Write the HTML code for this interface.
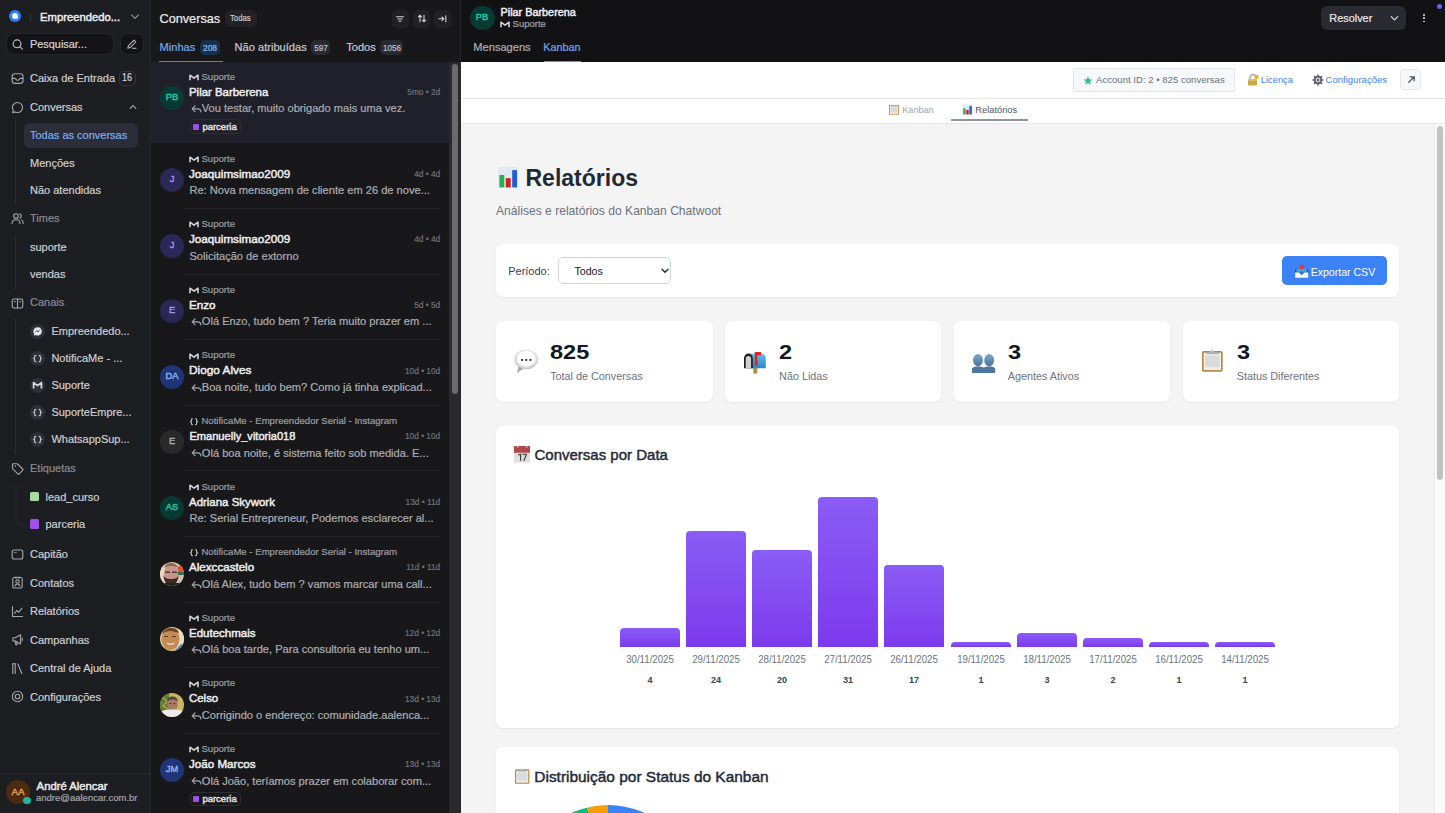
<!DOCTYPE html>
<html><head><meta charset="utf-8"><style>
html,body{margin:0;padding:0;}
body{width:1445px;height:813px;overflow:hidden;position:relative;background:#18181b;font-family:"Liberation Sans",sans-serif;}
.t{position:absolute;white-space:nowrap;}
.b{position:absolute;}
</style></head><body>
<div class="b" style="left:0.00px;top:0.00px;width:150.00px;height:813.00px;background:#1d1e22;"></div>
<div class="b" style="left:149.00px;top:0.00px;width:2.50px;height:813.00px;background:#232428;"></div>
<svg class="b" style="left:9.10px;top:10.30px;" width="12" height="12" viewBox="0 0 12 12"><circle cx="6" cy="6" r="6" fill="#2b82f5"/><path d="M8.9 5.9a2.9 2.9 0 1 0-2.9 2.9H8.9z" fill="#fff"/></svg>
<div class="b" style="left:30.00px;top:12.50px;width:1.00px;height:8.50px;background:#34353a;"></div>
<div class="t" style="left:40.00px;top:12.00px;font-size:11.25px;line-height:11.25px;color:#ececee;-webkit-text-stroke:0.45px #ececee;">Empreendedo...</div>
<svg class="b" style="left:130.00px;top:13.00px;" width="10" height="7" viewBox="0 0 10 7"><path d="M1.5 1.8l3.5 3.5 3.5-3.5" stroke="#8d8f96" stroke-width="1.2" fill="none" stroke-linecap="round" stroke-linejoin="round"/></svg>
<div class="b" style="left:6.00px;top:33.00px;width:108.00px;height:21.50px;background:#141418;border:1px solid #27282d;border-radius:8px;box-sizing:border-box;"></div>
<svg class="b" style="left:12.00px;top:39.00px;" width="12" height="11" viewBox="0 0 12 11"><circle cx="5" cy="4.8" r="3.9" stroke="#bdbec3" stroke-width="1.15" fill="none"/><path d="M7.9 7.7l2.5 2.5" stroke="#bdbec3" stroke-width="1.15" stroke-linecap="round"/></svg>
<div class="t" style="left:30.00px;top:39.00px;font-size:10.9px;line-height:10.9px;color:#d4d5d9;-webkit-text-stroke:0.2px #d4d5d9;">Pesquisar...</div>
<div class="b" style="left:120.00px;top:33.00px;width:24.00px;height:21.50px;background:#141418;border:1px solid #27282d;border-radius:8px;box-sizing:border-box;"></div>
<svg class="b" style="left:126.00px;top:38.00px;" width="12" height="12" viewBox="0 0 12 12"><path d="M8 2.2l1.8 1.8-5.6 5.6-2.4.6.6-2.4z" stroke="#bdbec3" stroke-width="1.05" fill="none" stroke-linejoin="round"/><path d="M6.5 10.2h3.5" stroke="#bdbec3" stroke-width="1.05" stroke-linecap="round"/></svg>
<svg class="b" style="left:11.00px;top:71.50px;" width="13" height="13" viewBox="0 0 13 13"><rect x="1.2" y="1.8" width="10.8" height="9.6" rx="2.6" stroke="#a4a6ac" stroke-width="1.1" fill="none" stroke-linecap="round" stroke-linejoin="round"/><path d="M1.2 6.4h2.6c.5 0 .8.3 1 .7.4.8 1 1.2 1.8 1.2s1.4-.4 1.8-1.2c.2-.4.5-.7 1-.7h2.6" stroke="#a4a6ac" stroke-width="1.1" fill="none" stroke-linecap="round" stroke-linejoin="round"/></svg>
<div class="t" style="left:30.00px;top:73.00px;font-size:11px;line-height:11px;color:#cdced2;-webkit-text-stroke:0.2px #cdced2;">Caixa de Entrada</div>
<div class="b" style="left:119.30px;top:70.60px;width:16.30px;height:15.80px;border:1px solid #34353b;border-radius:4px;box-sizing:border-box;"></div>
<div class="t" style="left:27.45px;width:200px;text-align:center;top:73.00px;font-size:10.4px;line-height:10.4px;color:#d4d5d9;-webkit-text-stroke:0.2px #d4d5d9;transform:scaleX(0.86);transform-origin:center;">16</div>
<svg class="b" style="left:11.00px;top:101.00px;" width="13" height="13" viewBox="0 0 13 13"><path d="M6.5 1.5a5 5 0 0 1 0 10c-.9 0-1.7-.2-2.4-.6l-2.6.8.8-2.4A5 5 0 0 1 6.5 1.5z" stroke="#a4a6ac" stroke-width="1.1" fill="none" stroke-linecap="round" stroke-linejoin="round"/></svg>
<div class="t" style="left:30.00px;top:102.00px;font-size:11px;line-height:11px;color:#cdced2;-webkit-text-stroke:0.2px #cdced2;">Conversas</div>
<svg class="b" style="left:129.00px;top:104.00px;" width="8" height="6" viewBox="0 0 8 6"><path d="M1.2 4.3L4 1.6l2.8 2.7" stroke="#a4a6ac" stroke-width="1.1" fill="none" stroke-linecap="round"/></svg>
<div class="b" style="left:15.00px;top:118.00px;width:1.00px;height:86.00px;background:#2a2b30;"></div>
<div class="b" style="left:24.00px;top:123.00px;width:114.00px;height:25.00px;background:#2b2d38;border-radius:6px;"></div>
<div class="t" style="left:30.00px;top:130.00px;font-size:11px;line-height:11px;color:#79b0f1;-webkit-text-stroke:0.2px #79b0f1;">Todas as conversas</div>
<div class="t" style="left:30.00px;top:158.00px;font-size:11px;line-height:11px;color:#cdced2;-webkit-text-stroke:0.2px #cdced2;">Menções</div>
<div class="t" style="left:30.00px;top:185.00px;font-size:11px;line-height:11px;color:#cdced2;-webkit-text-stroke:0.2px #cdced2;">Não atendidas</div>
<svg class="b" style="left:11.00px;top:212.00px;" width="13" height="13" viewBox="0 0 13 13"><circle cx="5" cy="4" r="2.3" stroke="#a4a6ac" stroke-width="1.1" fill="none" stroke-linecap="round" stroke-linejoin="round"/><path d="M1 11.5c0-2.2 1.8-3.8 4-3.8s4 1.6 4 3.8" stroke="#a4a6ac" stroke-width="1.1" fill="none" stroke-linecap="round" stroke-linejoin="round"/><path d="M8.6 1.9a2.2 2.2 0 0 1 0 4.3M10.5 7.9c1 .6 1.7 1.9 1.7 3.6" stroke="#a4a6ac" stroke-width="1.1" fill="none" stroke-linecap="round" stroke-linejoin="round"/></svg>
<div class="t" style="left:30.00px;top:213.00px;font-size:11px;line-height:11px;color:#8a8c93;-webkit-text-stroke:0.2px #8a8c93;">Times</div>
<div class="b" style="left:15.00px;top:235.00px;width:1.00px;height:54.00px;background:#2a2b30;"></div>
<div class="t" style="left:30.00px;top:242.00px;font-size:11px;line-height:11px;color:#cdced2;-webkit-text-stroke:0.2px #cdced2;">suporte</div>
<div class="t" style="left:30.00px;top:269.00px;font-size:11px;line-height:11px;color:#cdced2;-webkit-text-stroke:0.2px #cdced2;">vendas</div>
<svg class="b" style="left:11.00px;top:296.50px;" width="13" height="13" viewBox="0 0 13 13"><rect x="1.2" y="2" width="10.6" height="9" rx="1.8" stroke="#a4a6ac" stroke-width="1.1" fill="none" stroke-linecap="round" stroke-linejoin="round"/><path d="M6.5 2v9M3.3 4.8h1.2M8.5 4.8h1.2" stroke="#a4a6ac" stroke-width="1.1" fill="none" stroke-linecap="round" stroke-linejoin="round"/></svg>
<div class="t" style="left:30.00px;top:297.00px;font-size:11px;line-height:11px;color:#8a8c93;-webkit-text-stroke:0.2px #8a8c93;">Canais</div>
<div class="b" style="left:15.00px;top:319.00px;width:1.00px;height:135.50px;background:#2a2b30;"></div>
<svg class="b" style="left:30.10px;top:323.90px;" width="15" height="15" viewBox="0 0 15 15"><circle cx="7.5" cy="7.5" r="7.5" fill="#2e3039"/><path d="M7.5 3.3a4.1 4.1 0 0 0-3.3 6.6l-.3 1.8 1.7-.8A4.1 4.1 0 1 0 7.5 3.3z" fill="#e6e7ea"/><path d="M5.3 8.2l1.5-1.5 1.2 1 1.6-1.5" stroke="#2e3039" stroke-width=".9" fill="none"/></svg>
<div class="t" style="left:51.40px;top:326.00px;font-size:11px;line-height:11px;color:#cdced2;-webkit-text-stroke:0.2px #cdced2;">Empreendedo...</div>
<svg class="b" style="left:30.10px;top:351.00px;" width="15" height="15" viewBox="0 0 15 15"><circle cx="7.5" cy="7.5" r="7.5" fill="#2e3039"/><path d="M5.9 4.3c-.8 0-1.2.4-1.2 1v.8c0 .6-.3 1.1-.9 1.4.6.3.9.8.9 1.4v.8c0 .6.4 1 1.2 1M9.1 4.3c.8 0 1.2.4 1.2 1v.8c0 .6.3 1.1.9 1.4-.6.3-.9.8-.9 1.4v.8c0 .6-.4 1-1.2 1" stroke="#c9cace" stroke-width="1.15" fill="none" stroke-linecap="round"/></svg>
<div class="t" style="left:51.40px;top:353.00px;font-size:11px;line-height:11px;color:#cdced2;-webkit-text-stroke:0.2px #cdced2;">NotificaMe - ...</div>
<svg class="b" style="left:30.10px;top:378.00px;" width="15" height="15" viewBox="0 0 15 15"><circle cx="7.5" cy="7.5" r="7.5" fill="#2e3039"/><path d="M3.6 10.5V4.6l3.9 3 3.9-3v5.9" stroke="#dcdde0" stroke-width="1.7" fill="none" stroke-linejoin="round"/></svg>
<div class="t" style="left:51.40px;top:380.00px;font-size:11px;line-height:11px;color:#cdced2;-webkit-text-stroke:0.2px #cdced2;">Suporte</div>
<svg class="b" style="left:30.10px;top:404.90px;" width="15" height="15" viewBox="0 0 15 15"><circle cx="7.5" cy="7.5" r="7.5" fill="#2e3039"/><path d="M5.9 4.3c-.8 0-1.2.4-1.2 1v.8c0 .6-.3 1.1-.9 1.4.6.3.9.8.9 1.4v.8c0 .6.4 1 1.2 1M9.1 4.3c.8 0 1.2.4 1.2 1v.8c0 .6.3 1.1.9 1.4-.6.3-.9.8-.9 1.4v.8c0 .6-.4 1-1.2 1" stroke="#c9cace" stroke-width="1.15" fill="none" stroke-linecap="round"/></svg>
<div class="t" style="left:51.40px;top:407.00px;font-size:11px;line-height:11px;color:#cdced2;-webkit-text-stroke:0.2px #cdced2;">SuporteEmpre...</div>
<svg class="b" style="left:30.10px;top:432.20px;" width="15" height="15" viewBox="0 0 15 15"><circle cx="7.5" cy="7.5" r="7.5" fill="#2e3039"/><path d="M5.9 4.3c-.8 0-1.2.4-1.2 1v.8c0 .6-.3 1.1-.9 1.4.6.3.9.8.9 1.4v.8c0 .6.4 1 1.2 1M9.1 4.3c.8 0 1.2.4 1.2 1v.8c0 .6.3 1.1.9 1.4-.6.3-.9.8-.9 1.4v.8c0 .6-.4 1-1.2 1" stroke="#c9cace" stroke-width="1.15" fill="none" stroke-linecap="round"/></svg>
<div class="t" style="left:51.40px;top:434.00px;font-size:11px;line-height:11px;color:#cdced2;-webkit-text-stroke:0.2px #cdced2;">WhatsappSup...</div>
<svg class="b" style="left:11.00px;top:461.50px;" width="13" height="13" viewBox="0 0 13 13"><path d="M1.5 2.5v3.6c0 .3.1.5.3.7l5 5c.4.4 1 .4 1.4 0l3.4-3.4c.4-.4.4-1 0-1.4l-5-5c-.2-.2-.4-.3-.7-.3H2.5c-.6 0-1 .4-1 .8z" stroke="#a4a6ac" stroke-width="1.1" fill="none" stroke-linecap="round" stroke-linejoin="round"/><circle cx="4.3" cy="4.3" r=".8" fill="#a4a6ac"/></svg>
<div class="t" style="left:30.00px;top:463.00px;font-size:11px;line-height:11px;color:#8a8c93;-webkit-text-stroke:0.2px #8a8c93;">Etiquetas</div>
<svg class="b" style="left:14.50px;top:484.50px;" width="10" height="41" viewBox="0 0 10 41"><path d="M1 0v35c0 2.8 2.2 5 5 5h4" stroke="#2a2b30" stroke-width="1" fill="none"/></svg>
<div class="b" style="left:30.00px;top:492.00px;width:9.20px;height:9.40px;background:#a6dba2;border-radius:1.5px;"></div>
<div class="t" style="left:45.50px;top:492.00px;font-size:11px;line-height:11px;color:#cdced2;-webkit-text-stroke:0.2px #cdced2;">lead_curso</div>
<div class="b" style="left:30.00px;top:519.40px;width:9.20px;height:9.20px;background:#9d50ea;border-radius:1.5px;"></div>
<div class="t" style="left:45.50px;top:519.00px;font-size:11px;line-height:11px;color:#cdced2;-webkit-text-stroke:0.2px #cdced2;">parceria</div>
<svg class="b" style="left:11.00px;top:547.50px;" width="13" height="13" viewBox="0 0 13 13"><rect x="1.2" y="2" width="10.6" height="9" rx="2" stroke="#a4a6ac" stroke-width="1.1" fill="none" stroke-linecap="round" stroke-linejoin="round"/><path d="M3.6 4.6h.1M5 4.6h.1" stroke="#a4a6ac" stroke-width="1.1" fill="none" stroke-linecap="round" stroke-linejoin="round"/></svg>
<div class="t" style="left:30.00px;top:549.00px;font-size:11px;line-height:11px;color:#cdced2;-webkit-text-stroke:0.2px #cdced2;">Capitão</div>
<svg class="b" style="left:11.00px;top:576.00px;" width="13" height="13" viewBox="0 0 13 13"><rect x="1.8" y="1.5" width="9.4" height="10.5" rx="1.2" stroke="#a4a6ac" stroke-width="1.1" fill="none" stroke-linecap="round" stroke-linejoin="round"/><circle cx="6.5" cy="5.6" r="1.7" stroke="#a4a6ac" stroke-width="1.1" fill="none" stroke-linecap="round" stroke-linejoin="round"/><path d="M4 10c.4-1.3 1.3-2 2.5-2s2.1.7 2.5 2M5 .8v1.4M8 .8v1.4" stroke="#a4a6ac" stroke-width="1.1" fill="none" stroke-linecap="round" stroke-linejoin="round"/></svg>
<div class="t" style="left:30.00px;top:578.00px;font-size:11px;line-height:11px;color:#cdced2;-webkit-text-stroke:0.2px #cdced2;">Contatos</div>
<svg class="b" style="left:11.00px;top:604.50px;" width="13" height="13" viewBox="0 0 13 13"><path d="M1.5 1.5v10h10" stroke="#a4a6ac" stroke-width="1.1" fill="none" stroke-linecap="round" stroke-linejoin="round"/><path d="M3.5 8.5l2.3-3 2 1.7 3.2-4" stroke="#a4a6ac" stroke-width="1.1" fill="none" stroke-linecap="round" stroke-linejoin="round"/></svg>
<div class="t" style="left:30.00px;top:606.00px;font-size:11px;line-height:11px;color:#cdced2;-webkit-text-stroke:0.2px #cdced2;">Relatórios</div>
<svg class="b" style="left:11.00px;top:633.00px;" width="13" height="13" viewBox="0 0 13 13"><path d="M2 4.8h2.2l5.3-3v9.2l-5.3-3H2z" stroke="#a4a6ac" stroke-width="1.1" fill="none" stroke-linecap="round" stroke-linejoin="round"/><path d="M4 8l.8 3.6h1.4L5.7 8.4M11.2 5v3" stroke="#a4a6ac" stroke-width="1.1" fill="none" stroke-linecap="round" stroke-linejoin="round"/></svg>
<div class="t" style="left:30.00px;top:635.00px;font-size:11px;line-height:11px;color:#cdced2;-webkit-text-stroke:0.2px #cdced2;">Campanhas</div>
<svg class="b" style="left:11.00px;top:661.50px;" width="13" height="13" viewBox="0 0 13 13"><path d="M1.8 1.8v9.7M4.2 1.8v9.7M6.8 1.8l4 9.7" stroke="#a4a6ac" stroke-width="1.1" fill="none" stroke-linecap="round" stroke-linejoin="round"/><path d="M1.8 1.8h2.4" stroke="#a4a6ac" stroke-width="1.1" fill="none" stroke-linecap="round" stroke-linejoin="round"/></svg>
<div class="t" style="left:30.00px;top:663.00px;font-size:11px;line-height:11px;color:#cdced2;-webkit-text-stroke:0.2px #cdced2;">Central de Ajuda</div>
<svg class="b" style="left:11.00px;top:690.00px;" width="13" height="13" viewBox="0 0 13 13"><circle cx="6.5" cy="6.5" r="5.2" stroke="#a4a6ac" stroke-width="1.1" fill="none" stroke-linecap="round" stroke-linejoin="round"/><circle cx="6.5" cy="6.5" r="2.3" stroke="#a4a6ac" stroke-width="1.1" fill="none" stroke-linecap="round" stroke-linejoin="round"/></svg>
<div class="t" style="left:30.00px;top:692.00px;font-size:11px;line-height:11px;color:#cdced2;-webkit-text-stroke:0.2px #cdced2;">Configurações</div>
<div class="b" style="left:0.00px;top:773.00px;width:150.00px;height:1.00px;background:#29292e;"></div>
<div class="b" style="left:6.00px;top:780.00px;width:24.00px;height:24.00px;background:#4b2b12;border-radius:50%;"></div>
<div class="t" style="left:-82.00px;width:200px;text-align:center;top:787.00px;font-size:9.8px;line-height:9.8px;color:#f2a35c;-webkit-text-stroke:0.4px #f2a35c;">AA</div>
<div class="b" style="left:22.80px;top:796.60px;width:7.80px;height:7.80px;background:#1fb5a2;border-radius:50%;"></div>
<div class="t" style="left:36.60px;top:781.00px;font-size:11.3px;line-height:11.3px;color:#ececee;-webkit-text-stroke:0.45px #ececee;">André Alencar</div>
<div class="t" style="left:36.00px;top:793.00px;font-size:9.5px;line-height:9.5px;color:#a3a5ab;-webkit-text-stroke:0.2px #a3a5ab;">andre@aalencar.com.br</div>
<div class="b" style="left:151.00px;top:0.00px;width:310.00px;height:813.00px;background:#18181b;"></div>
<div class="t" style="left:159.50px;top:13.00px;font-size:12.7px;line-height:12.7px;color:#eeeef0;-webkit-text-stroke:0.2px #eeeef0;">Conversas</div>
<div class="b" style="left:224.80px;top:9.90px;width:32.20px;height:16.90px;background:#222226;border-radius:5px;"></div>
<div class="t" style="left:230.30px;top:14.00px;font-size:8.6px;line-height:8.6px;color:#c8c9cd;-webkit-text-stroke:0.2px #c8c9cd;transform:scaleX(0.9);transform-origin:left;">Todas</div>
<div class="b" style="left:391.70px;top:10.00px;width:17.30px;height:17.50px;background:#212125;border-radius:5px;"></div>
<div class="b" style="left:413.00px;top:10.00px;width:17.30px;height:17.50px;background:#212125;border-radius:5px;"></div>
<div class="b" style="left:433.80px;top:10.00px;width:17.30px;height:17.50px;background:#212125;border-radius:5px;"></div>
<svg class="b" style="left:394.30px;top:12.50px;" width="12" height="12" viewBox="0 0 12 12"><path d="M2.5 3.8h7M3.8 6h4.4M5 8.2h2" stroke="#d4d5d9" stroke-width="1.1" fill="none" stroke-linecap="round"/></svg>
<svg class="b" style="left:415.60px;top:12.50px;" width="12" height="12" viewBox="0 0 12 12"><path d="M4 8.8V2.3M2.4 3.9L4 2.3l1.6 1.6M8 2.3v6.5M6.4 7.2L8 8.8l1.6-1.6" stroke="#d4d5d9" stroke-width="1.1" fill="none" stroke-linecap="round"/></svg>
<svg class="b" style="left:436.40px;top:12.50px;" width="12" height="12" viewBox="0 0 12 12"><path d="M3 5.8h4.8M6 4l1.8 1.8L6 7.6M9.8 2.8v6" stroke="#d4d5d9" stroke-width="1.1" fill="none" stroke-linecap="round"/></svg>
<div class="t" style="left:159.50px;top:42.00px;font-size:11.1px;line-height:11.1px;color:#70a9ef;-webkit-text-stroke:0.2px #70a9ef;">Minhas</div>
<div class="b" style="left:199.60px;top:40.00px;width:20.00px;height:14.50px;background:#18304f;border-radius:5px;"></div>
<div class="t" style="left:109.60px;width:200px;text-align:center;top:44.00px;font-size:9.3px;line-height:9.3px;color:#8fc0f5;-webkit-text-stroke:0.2px #8fc0f5;transform:scaleX(0.9);transform-origin:center;">208</div>
<div class="t" style="left:234.60px;top:42.00px;font-size:11.1px;line-height:11.1px;color:#c9cacf;-webkit-text-stroke:0.2px #c9cacf;">Não atribuídas</div>
<div class="b" style="left:311.40px;top:40.00px;width:18.60px;height:14.50px;background:#2a2b32;border-radius:5px;"></div>
<div class="t" style="left:220.70px;width:200px;text-align:center;top:44.00px;font-size:9.2px;line-height:9.2px;color:#c3c4ca;-webkit-text-stroke:0.2px #c3c4ca;transform:scaleX(0.88);transform-origin:center;">597</div>
<div class="t" style="left:346.20px;top:42.00px;font-size:11.1px;line-height:11.1px;color:#c9cacf;-webkit-text-stroke:0.2px #c9cacf;">Todos</div>
<div class="b" style="left:380.30px;top:40.00px;width:22.90px;height:14.50px;background:#2a2b32;border-radius:5px;"></div>
<div class="t" style="left:291.75px;width:200px;text-align:center;top:44.00px;font-size:9.2px;line-height:9.2px;color:#c3c4ca;-webkit-text-stroke:0.2px #c3c4ca;transform:scaleX(0.88);transform-origin:center;">1056</div>
<div class="b" style="left:159.30px;top:60.60px;width:63.70px;height:1.60px;background:#3b87ee;"></div>
<div class="b" style="left:151.00px;top:62.00px;width:298.00px;height:81.00px;background:#1f2029;"></div>
<div class="b" style="left:159.60px;top:86.10px;width:24.00px;height:24.00px;background:#073a33;border-radius:50%;"></div>
<div class="t" style="left:71.60px;width:200px;text-align:center;top:92.00px;font-size:9.8px;line-height:9.8px;color:#1fcca4;-webkit-text-stroke:0.4px #1fcca4;transform:scaleX(0.95);transform-origin:center;">PB</div>
<svg class="b" style="left:189.20px;top:73.90px;" width="10" height="7" viewBox="0 0 10 7"><path d="M1 6.3V1.2l4 3 4-3v5.1" stroke="#d3d4d8" stroke-width="1.6" fill="none" stroke-linejoin="round"/></svg>
<div class="t" style="left:201.40px;top:72.00px;font-size:9.6px;line-height:9.6px;color:#9c9ea4;-webkit-text-stroke:0.2px #9c9ea4;">Suporte</div>
<div class="t" style="left:189.40px;top:87.00px;font-size:11.1px;line-height:11.1px;color:#eeeef0;-webkit-text-stroke:0.45px #eeeef0;transform:scaleX(1.029);transform-origin:left;">Pilar Barberena</div>
<div class="t" style="right:1004.80px;top:88.00px;font-size:8.3px;line-height:8.3px;color:#6f7178;-webkit-text-stroke:0.2px #6f7178;">5mo • 2d</div>
<svg class="b" style="left:190.50px;top:105.20px;" width="11" height="8" viewBox="0 0 11 8"><path d="M4 1L1.2 3.8 4 6.6M1.4 3.8h5.2c2 0 3.3 1.2 3.3 3.2" stroke="#a3a5ab" stroke-width="1.2" fill="none" stroke-linecap="round" stroke-linejoin="round"/></svg>
<div class="t" style="left:201.80px;top:103.00px;font-size:11.1px;line-height:11.1px;color:#acaeb4;-webkit-text-stroke:0.2px #acaeb4;">Vou testar, muito obrigado mais uma vez.</div>
<div class="b" style="left:189.50px;top:119.30px;width:51.90px;height:14.70px;border:1px solid #2d2e33;border-radius:4px;box-sizing:border-box;"></div>
<div class="b" style="left:193.20px;top:123.50px;width:6.20px;height:6.30px;background:#9d50ea;border-radius:1px;"></div>
<div class="t" style="left:202.40px;top:122.00px;font-size:9.5px;line-height:9.5px;color:#e4e4e7;-webkit-text-stroke:0.4px #e4e4e7;">parceria</div>
<div class="b" style="left:159.60px;top:167.90px;width:24.00px;height:24.00px;background:#2a2856;border-radius:50%;"></div>
<div class="t" style="left:71.60px;width:200px;text-align:center;top:174.00px;font-size:9.8px;line-height:9.8px;color:#a394f3;-webkit-text-stroke:0.4px #a394f3;transform:scaleX(0.95);transform-origin:center;">J</div>
<svg class="b" style="left:189.20px;top:155.70px;" width="10" height="7" viewBox="0 0 10 7"><path d="M1 6.3V1.2l4 3 4-3v5.1" stroke="#d3d4d8" stroke-width="1.6" fill="none" stroke-linejoin="round"/></svg>
<div class="t" style="left:201.40px;top:154.00px;font-size:9.6px;line-height:9.6px;color:#9c9ea4;-webkit-text-stroke:0.2px #9c9ea4;">Suporte</div>
<div class="t" style="left:189.40px;top:169.00px;font-size:11.1px;line-height:11.1px;color:#eeeef0;-webkit-text-stroke:0.45px #eeeef0;transform:scaleX(1.052);transform-origin:left;">Joaquimsimao2009</div>
<div class="t" style="right:1004.80px;top:170.00px;font-size:8.3px;line-height:8.3px;color:#6f7178;-webkit-text-stroke:0.2px #6f7178;">4d • 4d</div>
<div class="t" style="left:189.40px;top:185.00px;font-size:11.1px;line-height:11.1px;color:#acaeb4;-webkit-text-stroke:0.2px #acaeb4;">Re: Nova mensagem de cliente em 26 de nove...</div>
<div class="b" style="left:183.60px;top:208.00px;width:256.60px;height:1.00px;background:#242428;"></div>
<div class="b" style="left:159.60px;top:233.50px;width:24.00px;height:24.00px;background:#2a2856;border-radius:50%;"></div>
<div class="t" style="left:71.60px;width:200px;text-align:center;top:240.00px;font-size:9.8px;line-height:9.8px;color:#a394f3;-webkit-text-stroke:0.4px #a394f3;transform:scaleX(0.95);transform-origin:center;">J</div>
<svg class="b" style="left:189.20px;top:221.30px;" width="10" height="7" viewBox="0 0 10 7"><path d="M1 6.3V1.2l4 3 4-3v5.1" stroke="#d3d4d8" stroke-width="1.6" fill="none" stroke-linejoin="round"/></svg>
<div class="t" style="left:201.40px;top:219.00px;font-size:9.6px;line-height:9.6px;color:#9c9ea4;-webkit-text-stroke:0.2px #9c9ea4;">Suporte</div>
<div class="t" style="left:189.40px;top:234.00px;font-size:11.1px;line-height:11.1px;color:#eeeef0;-webkit-text-stroke:0.45px #eeeef0;transform:scaleX(1.052);transform-origin:left;">Joaquimsimao2009</div>
<div class="t" style="right:1004.80px;top:235.00px;font-size:8.3px;line-height:8.3px;color:#6f7178;-webkit-text-stroke:0.2px #6f7178;">4d • 4d</div>
<div class="t" style="left:189.40px;top:251.00px;font-size:11.1px;line-height:11.1px;color:#acaeb4;-webkit-text-stroke:0.2px #acaeb4;">Solicitação de extorno</div>
<div class="b" style="left:183.60px;top:273.60px;width:256.60px;height:1.00px;background:#242428;"></div>
<div class="b" style="left:159.60px;top:299.10px;width:24.00px;height:24.00px;background:#2a2856;border-radius:50%;"></div>
<div class="t" style="left:71.60px;width:200px;text-align:center;top:305.00px;font-size:9.8px;line-height:9.8px;color:#a394f3;-webkit-text-stroke:0.4px #a394f3;transform:scaleX(0.95);transform-origin:center;">E</div>
<svg class="b" style="left:189.20px;top:286.90px;" width="10" height="7" viewBox="0 0 10 7"><path d="M1 6.3V1.2l4 3 4-3v5.1" stroke="#d3d4d8" stroke-width="1.6" fill="none" stroke-linejoin="round"/></svg>
<div class="t" style="left:201.40px;top:285.00px;font-size:9.6px;line-height:9.6px;color:#9c9ea4;-webkit-text-stroke:0.2px #9c9ea4;">Suporte</div>
<div class="t" style="left:189.40px;top:300.00px;font-size:11.1px;line-height:11.1px;color:#eeeef0;-webkit-text-stroke:0.45px #eeeef0;transform:scaleX(1.051);transform-origin:left;">Enzo</div>
<div class="t" style="right:1004.80px;top:301.00px;font-size:8.3px;line-height:8.3px;color:#6f7178;-webkit-text-stroke:0.2px #6f7178;">5d • 5d</div>
<svg class="b" style="left:190.50px;top:318.20px;" width="11" height="8" viewBox="0 0 11 8"><path d="M4 1L1.2 3.8 4 6.6M1.4 3.8h5.2c2 0 3.3 1.2 3.3 3.2" stroke="#a3a5ab" stroke-width="1.2" fill="none" stroke-linecap="round" stroke-linejoin="round"/></svg>
<div class="t" style="left:201.80px;top:316.00px;font-size:11.1px;line-height:11.1px;color:#acaeb4;-webkit-text-stroke:0.2px #acaeb4;">Olá Enzo, tudo bem ? Teria muito prazer em ...</div>
<div class="b" style="left:183.60px;top:339.20px;width:256.60px;height:1.00px;background:#242428;"></div>
<div class="b" style="left:159.60px;top:364.70px;width:24.00px;height:24.00px;background:#1f3576;border-radius:50%;"></div>
<div class="t" style="left:71.60px;width:200px;text-align:center;top:371.00px;font-size:9.8px;line-height:9.8px;color:#8fb2f3;-webkit-text-stroke:0.4px #8fb2f3;transform:scaleX(0.95);transform-origin:center;">DA</div>
<svg class="b" style="left:189.20px;top:352.50px;" width="10" height="7" viewBox="0 0 10 7"><path d="M1 6.3V1.2l4 3 4-3v5.1" stroke="#d3d4d8" stroke-width="1.6" fill="none" stroke-linejoin="round"/></svg>
<div class="t" style="left:201.40px;top:350.00px;font-size:9.6px;line-height:9.6px;color:#9c9ea4;-webkit-text-stroke:0.2px #9c9ea4;">Suporte</div>
<div class="t" style="left:189.40px;top:365.00px;font-size:11.1px;line-height:11.1px;color:#eeeef0;-webkit-text-stroke:0.45px #eeeef0;transform:scaleX(1.066);transform-origin:left;">Diogo Alves</div>
<div class="t" style="right:1004.80px;top:367.00px;font-size:8.3px;line-height:8.3px;color:#6f7178;-webkit-text-stroke:0.2px #6f7178;">10d • 10d</div>
<svg class="b" style="left:190.50px;top:383.80px;" width="11" height="8" viewBox="0 0 11 8"><path d="M4 1L1.2 3.8 4 6.6M1.4 3.8h5.2c2 0 3.3 1.2 3.3 3.2" stroke="#a3a5ab" stroke-width="1.2" fill="none" stroke-linecap="round" stroke-linejoin="round"/></svg>
<div class="t" style="left:201.80px;top:382.00px;font-size:11.1px;line-height:11.1px;color:#acaeb4;-webkit-text-stroke:0.2px #acaeb4;">Boa noite, tudo bem? Como já tinha explicad...</div>
<div class="b" style="left:183.60px;top:404.80px;width:256.60px;height:1.00px;background:#242428;"></div>
<div class="b" style="left:159.60px;top:430.30px;width:24.00px;height:24.00px;background:#2a2a2c;border-radius:50%;"></div>
<div class="t" style="left:71.60px;width:200px;text-align:center;top:436.00px;font-size:9.8px;line-height:9.8px;color:#aeafb3;-webkit-text-stroke:0.4px #aeafb3;transform:scaleX(0.95);transform-origin:center;">E</div>
<svg class="b" style="left:189.20px;top:417.60px;" width="10" height="8" viewBox="0 0 10 8"><path d="M3.4 .8c-.7 0-1 .3-1 .9v.8c0 .5-.3.9-.8 1.2.5.3.8.7.8 1.2v.8c0 .6.3.9 1 .9M6.6 .8c.7 0 1 .3 1 .9v.8c0 .5.3.9.8 1.2-.5.3-.8.7-.8 1.2v.8c0 .6-.3.9-1 .9" stroke="#c9cace" stroke-width="1.1" fill="none" stroke-linecap="round"/></svg>
<div class="t" style="left:201.40px;top:416.00px;font-size:9.6px;line-height:9.6px;color:#9c9ea4;-webkit-text-stroke:0.2px #9c9ea4;">NotificaMe - Empreendedor Serial - Instagram</div>
<div class="t" style="left:189.40px;top:431.00px;font-size:11.1px;line-height:11.1px;color:#eeeef0;-webkit-text-stroke:0.45px #eeeef0;">Emanuelly_vitoria018</div>
<div class="t" style="right:1004.80px;top:432.00px;font-size:8.3px;line-height:8.3px;color:#6f7178;-webkit-text-stroke:0.2px #6f7178;">10d • 10d</div>
<svg class="b" style="left:190.50px;top:449.40px;" width="11" height="8" viewBox="0 0 11 8"><path d="M4 1L1.2 3.8 4 6.6M1.4 3.8h5.2c2 0 3.3 1.2 3.3 3.2" stroke="#a3a5ab" stroke-width="1.2" fill="none" stroke-linecap="round" stroke-linejoin="round"/></svg>
<div class="t" style="left:201.80px;top:448.00px;font-size:11.1px;line-height:11.1px;color:#acaeb4;-webkit-text-stroke:0.2px #acaeb4;">Olá boa noite, é sistema feito sob medida. E...</div>
<div class="b" style="left:183.60px;top:470.40px;width:256.60px;height:1.00px;background:#242428;"></div>
<div class="b" style="left:159.60px;top:495.90px;width:24.00px;height:24.00px;background:#073a33;border-radius:50%;"></div>
<div class="t" style="left:71.60px;width:200px;text-align:center;top:502.00px;font-size:9.8px;line-height:9.8px;color:#1fcca4;-webkit-text-stroke:0.4px #1fcca4;transform:scaleX(0.95);transform-origin:center;">AS</div>
<svg class="b" style="left:189.20px;top:483.70px;" width="10" height="7" viewBox="0 0 10 7"><path d="M1 6.3V1.2l4 3 4-3v5.1" stroke="#d3d4d8" stroke-width="1.6" fill="none" stroke-linejoin="round"/></svg>
<div class="t" style="left:201.40px;top:482.00px;font-size:9.6px;line-height:9.6px;color:#9c9ea4;-webkit-text-stroke:0.2px #9c9ea4;">Suporte</div>
<div class="t" style="left:189.40px;top:497.00px;font-size:11.1px;line-height:11.1px;color:#eeeef0;-webkit-text-stroke:0.45px #eeeef0;transform:scaleX(1.032);transform-origin:left;">Adriana Skywork</div>
<div class="t" style="right:1004.80px;top:498.00px;font-size:8.3px;line-height:8.3px;color:#6f7178;-webkit-text-stroke:0.2px #6f7178;">13d • 11d</div>
<div class="t" style="left:189.40px;top:513.00px;font-size:11.1px;line-height:11.1px;color:#acaeb4;-webkit-text-stroke:0.2px #acaeb4;">Re: Serial Entrepreneur, Podemos esclarecer al...</div>
<div class="b" style="left:183.60px;top:536.00px;width:256.60px;height:1.00px;background:#242428;"></div>
<svg class="b" style="left:159.60px;top:561.50px;" width="24" height="24" viewBox="0 0 24 24"><clipPath id="cp1"><circle cx="12" cy="12" r="12"/></clipPath><g clip-path="url(#cp1)"><rect width="24" height="24" fill="#cfc2a8"/><rect x="0" y="0" width="5" height="24" fill="#e8d8c0"/><circle cx="21" cy="7" r="3.6" fill="#e0552e"/><rect x="17" y="10" width="7" height="3" fill="#3a6a4a"/><ellipse cx="11" cy="11.5" rx="7" ry="8.5" fill="#c9958a"/><path d="M4 6c1-4 5-5 7-5s6 1 7 5c-2-1.5-4-2-7-2s-5 .5-7 2z" fill="#8a6a50"/><path d="M5 10.2h5M12 10.2h5" stroke="#4a4040" stroke-width="1.4"/><path d="M3.5 13c0 6 3 10 7.5 10s7.5-4 7.5-10c-1 3-3 4-7.5 4s-6.5-1-7.5-4z" fill="#3b2b24"/><rect x="0" y="21" width="24" height="3" fill="#222"/></g></svg>
<svg class="b" style="left:189.20px;top:548.80px;" width="10" height="8" viewBox="0 0 10 8"><path d="M3.4 .8c-.7 0-1 .3-1 .9v.8c0 .5-.3.9-.8 1.2.5.3.8.7.8 1.2v.8c0 .6.3.9 1 .9M6.6 .8c.7 0 1 .3 1 .9v.8c0 .5.3.9.8 1.2-.5.3-.8.7-.8 1.2v.8c0 .6-.3.9-1 .9" stroke="#c9cace" stroke-width="1.1" fill="none" stroke-linecap="round"/></svg>
<div class="t" style="left:201.40px;top:547.00px;font-size:9.6px;line-height:9.6px;color:#9c9ea4;-webkit-text-stroke:0.2px #9c9ea4;">NotificaMe - Empreendedor Serial - Instagram</div>
<div class="t" style="left:189.40px;top:562.00px;font-size:11.1px;line-height:11.1px;color:#eeeef0;-webkit-text-stroke:0.45px #eeeef0;transform:scaleX(1.046);transform-origin:left;">Alexccastelo</div>
<div class="t" style="right:1004.80px;top:563.00px;font-size:8.3px;line-height:8.3px;color:#6f7178;-webkit-text-stroke:0.2px #6f7178;">11d • 11d</div>
<svg class="b" style="left:190.50px;top:580.60px;" width="11" height="8" viewBox="0 0 11 8"><path d="M4 1L1.2 3.8 4 6.6M1.4 3.8h5.2c2 0 3.3 1.2 3.3 3.2" stroke="#a3a5ab" stroke-width="1.2" fill="none" stroke-linecap="round" stroke-linejoin="round"/></svg>
<div class="t" style="left:201.80px;top:579.00px;font-size:11.1px;line-height:11.1px;color:#acaeb4;-webkit-text-stroke:0.2px #acaeb4;">Olá Alex, tudo bem ? vamos marcar uma call...</div>
<div class="b" style="left:183.60px;top:601.60px;width:256.60px;height:1.00px;background:#242428;"></div>
<svg class="b" style="left:159.60px;top:627.10px;" width="24" height="24" viewBox="0 0 24 24"><clipPath id="cp2"><circle cx="12" cy="12" r="12"/></clipPath><g clip-path="url(#cp2)"><rect width="24" height="24" fill="#dcc898"/><rect x="18" y="0" width="6" height="24" fill="#e6dcc0"/><ellipse cx="10.5" cy="12" rx="9" ry="11" fill="#c48a55"/><path d="M2 7c2-5 6-6 9-6s7 1 8 5c-3-1-6-2-9-2s-6 1-8 3z" fill="#6a4525"/><path d="M4 9.5h4M12 9.5h4" stroke="#5a3a20" stroke-width="1.2"/><path d="M6.5 15.5c2 1.5 6 1.5 8 0l-.5 1.5c-2 1-5 1-7 0z" fill="#f4f0e8"/><path d="M15 24l6-7 4 2v6z" fill="#3d7cc9"/></g></svg>
<svg class="b" style="left:189.20px;top:614.90px;" width="10" height="7" viewBox="0 0 10 7"><path d="M1 6.3V1.2l4 3 4-3v5.1" stroke="#d3d4d8" stroke-width="1.6" fill="none" stroke-linejoin="round"/></svg>
<div class="t" style="left:201.40px;top:613.00px;font-size:9.6px;line-height:9.6px;color:#9c9ea4;-webkit-text-stroke:0.2px #9c9ea4;">Suporte</div>
<div class="t" style="left:189.40px;top:628.00px;font-size:11.1px;line-height:11.1px;color:#eeeef0;-webkit-text-stroke:0.45px #eeeef0;transform:scaleX(1.038);transform-origin:left;">Edutechmais</div>
<div class="t" style="right:1004.80px;top:629.00px;font-size:8.3px;line-height:8.3px;color:#6f7178;-webkit-text-stroke:0.2px #6f7178;">12d • 12d</div>
<svg class="b" style="left:190.50px;top:646.20px;" width="11" height="8" viewBox="0 0 11 8"><path d="M4 1L1.2 3.8 4 6.6M1.4 3.8h5.2c2 0 3.3 1.2 3.3 3.2" stroke="#a3a5ab" stroke-width="1.2" fill="none" stroke-linecap="round" stroke-linejoin="round"/></svg>
<div class="t" style="left:201.80px;top:644.00px;font-size:11.1px;line-height:11.1px;color:#acaeb4;-webkit-text-stroke:0.2px #acaeb4;">Olá boa tarde, Para consultoria eu tenho um...</div>
<div class="b" style="left:183.60px;top:667.20px;width:256.60px;height:1.00px;background:#242428;"></div>
<svg class="b" style="left:159.60px;top:692.70px;" width="24" height="24" viewBox="0 0 24 24"><clipPath id="cp3"><circle cx="12" cy="12" r="12"/></clipPath><g clip-path="url(#cp3)"><rect width="24" height="24" fill="#c9b462"/><path d="M0 0h9v24H0z" fill="#5f7d32"/><path d="M2 4l5 4-4 5 5 3" stroke="#b9a050" stroke-width="1.3" fill="none"/><ellipse cx="12.5" cy="11.5" rx="5.2" ry="6.8" fill="#a87a66"/><path d="M7.2 9c0-4 2.5-5.5 5.3-5.5s5.3 1.5 5.3 5.5c-1-2-3-2.5-5.3-2.5s-4.3.5-5.3 2.5z" fill="#4a4848"/><path d="M9.5 10.5h2M13.5 10.5h2" stroke="#4a3a35" stroke-width="1"/><path d="M0 24v-5c3-2 7-2.5 12.5-2.5S21 17 24 19v5z" fill="#ececf0"/></g></svg>
<svg class="b" style="left:189.20px;top:680.50px;" width="10" height="7" viewBox="0 0 10 7"><path d="M1 6.3V1.2l4 3 4-3v5.1" stroke="#d3d4d8" stroke-width="1.6" fill="none" stroke-linejoin="round"/></svg>
<div class="t" style="left:201.40px;top:678.00px;font-size:9.6px;line-height:9.6px;color:#9c9ea4;-webkit-text-stroke:0.2px #9c9ea4;">Suporte</div>
<div class="t" style="left:189.40px;top:693.00px;font-size:11.1px;line-height:11.1px;color:#eeeef0;-webkit-text-stroke:0.45px #eeeef0;transform:scaleX(1.029);transform-origin:left;">Celso</div>
<div class="t" style="right:1004.80px;top:695.00px;font-size:8.3px;line-height:8.3px;color:#6f7178;-webkit-text-stroke:0.2px #6f7178;">13d • 13d</div>
<svg class="b" style="left:190.50px;top:711.80px;" width="11" height="8" viewBox="0 0 11 8"><path d="M4 1L1.2 3.8 4 6.6M1.4 3.8h5.2c2 0 3.3 1.2 3.3 3.2" stroke="#a3a5ab" stroke-width="1.2" fill="none" stroke-linecap="round" stroke-linejoin="round"/></svg>
<div class="t" style="left:201.80px;top:710.00px;font-size:11.1px;line-height:11.1px;color:#acaeb4;-webkit-text-stroke:0.2px #acaeb4;">Corrigindo o endereço: comunidade.aalenca...</div>
<div class="b" style="left:183.60px;top:732.80px;width:256.60px;height:1.00px;background:#242428;"></div>
<div class="b" style="left:159.60px;top:758.30px;width:24.00px;height:24.00px;background:#1f3576;border-radius:50%;"></div>
<div class="t" style="left:71.60px;width:200px;text-align:center;top:764.00px;font-size:9.8px;line-height:9.8px;color:#8fb2f3;-webkit-text-stroke:0.4px #8fb2f3;transform:scaleX(0.95);transform-origin:center;">JM</div>
<svg class="b" style="left:189.20px;top:746.10px;" width="10" height="7" viewBox="0 0 10 7"><path d="M1 6.3V1.2l4 3 4-3v5.1" stroke="#d3d4d8" stroke-width="1.6" fill="none" stroke-linejoin="round"/></svg>
<div class="t" style="left:201.40px;top:744.00px;font-size:9.6px;line-height:9.6px;color:#9c9ea4;-webkit-text-stroke:0.2px #9c9ea4;">Suporte</div>
<div class="t" style="left:189.40px;top:759.00px;font-size:11.1px;line-height:11.1px;color:#eeeef0;-webkit-text-stroke:0.45px #eeeef0;transform:scaleX(1.047);transform-origin:left;">João Marcos</div>
<div class="t" style="right:1004.80px;top:760.00px;font-size:8.3px;line-height:8.3px;color:#6f7178;-webkit-text-stroke:0.2px #6f7178;">13d • 13d</div>
<svg class="b" style="left:190.50px;top:777.40px;" width="11" height="8" viewBox="0 0 11 8"><path d="M4 1L1.2 3.8 4 6.6M1.4 3.8h5.2c2 0 3.3 1.2 3.3 3.2" stroke="#a3a5ab" stroke-width="1.2" fill="none" stroke-linecap="round" stroke-linejoin="round"/></svg>
<div class="t" style="left:201.80px;top:776.00px;font-size:11.1px;line-height:11.1px;color:#acaeb4;-webkit-text-stroke:0.2px #acaeb4;">Olá João, teríamos prazer em colaborar com...</div>
<div class="b" style="left:189.50px;top:791.50px;width:51.90px;height:14.70px;border:1px solid #2d2e33;border-radius:4px;box-sizing:border-box;"></div>
<div class="b" style="left:193.20px;top:795.70px;width:6.20px;height:6.30px;background:#9d50ea;border-radius:1px;"></div>
<div class="t" style="left:202.40px;top:794.00px;font-size:9.5px;line-height:9.5px;color:#e4e4e7;-webkit-text-stroke:0.4px #e4e4e7;">parceria</div>
<div class="b" style="left:449.00px;top:62.00px;width:11.50px;height:751.00px;background:#2a2a2b;"></div>
<div class="b" style="left:452.20px;top:64.00px;width:6.10px;height:330.00px;background:#6b6b6c;border-radius:3px;"></div>
<div class="b" style="left:460.00px;top:0.00px;width:1.00px;height:813.00px;background:#27282c;"></div>
<div class="b" style="left:461.00px;top:0.00px;width:984.00px;height:62.00px;background:#121214;"></div>
<div class="b" style="left:470.20px;top:5.80px;width:24.50px;height:24.50px;background:#073a33;border-radius:50%;"></div>
<div class="t" style="left:382.45px;width:200px;text-align:center;top:12.00px;font-size:9.8px;line-height:9.8px;color:#1fcca4;-webkit-text-stroke:0.4px #1fcca4;transform:scaleX(0.95);transform-origin:center;">PB</div>
<div class="t" style="left:500.50px;top:7.00px;font-size:10.85px;line-height:10.85px;color:#eeeef0;-webkit-text-stroke:0.45px #eeeef0;">Pilar Barberena</div>
<svg class="b" style="left:500.20px;top:20.50px;" width="10" height="7" viewBox="0 0 10 7"><path d="M1 6.3V1.2l4 3 4-3v5.1" stroke="#d3d4d8" stroke-width="1.6" fill="none" stroke-linejoin="round"/></svg>
<div class="t" style="left:512.60px;top:19.00px;font-size:9.5px;line-height:9.5px;color:#a3a5ab;-webkit-text-stroke:0.2px #a3a5ab;">Suporte</div>
<div class="t" style="left:473.30px;top:42.00px;font-size:11.1px;line-height:11.1px;color:#aeb0b5;-webkit-text-stroke:0.2px #aeb0b5;">Mensagens</div>
<div class="t" style="left:543.20px;top:42.00px;font-size:10.8px;line-height:10.8px;color:#70a9ef;-webkit-text-stroke:0.2px #70a9ef;">Kanban</div>
<div class="b" style="left:543.50px;top:60.50px;width:37.50px;height:1.70px;background:#4f95ef;"></div>
<div class="b" style="left:1321.00px;top:6.00px;width:85.00px;height:24.00px;background:#2a2a33;border-radius:6px;"></div>
<div class="t" style="left:1329.30px;top:13.00px;font-size:10.9px;line-height:10.9px;color:#e8e8ea;-webkit-text-stroke:0.2px #e8e8ea;">Resolver</div>
<svg class="b" style="left:1389.50px;top:14.50px;" width="9" height="7" viewBox="0 0 9 7"><path d="M1.3 1.6L4.5 4.8l3.2-3.2" stroke="#e0e0e3" stroke-width="1.2" fill="none" stroke-linecap="round" stroke-linejoin="round"/></svg>
<div class="b" style="left:1422.80px;top:13.90px;width:2.00px;height:1.80px;background:#ededf0;border-radius:50%;"></div>
<div class="b" style="left:1422.80px;top:17.30px;width:2.00px;height:1.80px;background:#ededf0;border-radius:50%;"></div>
<div class="b" style="left:1422.80px;top:20.60px;width:2.00px;height:1.80px;background:#ededf0;border-radius:50%;"></div>
<div class="b" style="left:1436.70px;top:3.60px;width:5.10px;height:5.10px;background:#6366f1;border-radius:50%;"></div>
<div class="b" style="left:461.00px;top:62.00px;width:984.00px;height:751.00px;background:#f4f4f4;"></div>
<div class="b" style="left:461.00px;top:62.00px;width:984.00px;height:36.00px;background:#ffffff;"></div>
<div class="b" style="left:461.00px;top:98.00px;width:984.00px;height:1.00px;background:#e6e7ea;"></div>
<div class="b" style="left:461.00px;top:99.00px;width:984.00px;height:23.50px;background:#ffffff;"></div>
<div class="b" style="left:461.00px;top:122.50px;width:984.00px;height:1.00px;background:#e6e7ea;"></div>
<div class="b" style="left:1073.00px;top:68.00px;width:162.00px;height:23.60px;background:#f7f8fa;border:1px solid #e1e4e9;border-radius:2px;box-sizing:border-box;"></div>
<svg class="b" style="left:1082.50px;top:75.50px;" width="10" height="9" viewBox="0 0 10 9"><path d="M5 .3l1.3 2.9 3.2.3-2.4 2.1.7 3.1L5 7.1 2.2 8.7l.7-3.1L.5 3.5l3.2-.3z" fill="#35c08b"/></svg>
<div class="t" style="left:1096.00px;top:75.00px;font-size:9.6px;line-height:9.6px;color:#6b7280;">Account ID: 2 • 825 conversas</div>
<svg class="b" style="left:1246.50px;top:73.50px;" width="12" height="12" viewBox="0 0 12 12"><path d="M3 5.2V3.6a3 3 0 0 1 6 0v1.6" stroke="#9aa0a8" stroke-width="1.3" fill="none"/><rect x="1" y="5" width="9" height="6.5" rx="1" fill="#c9a742"/><rect x="1" y="5" width="9" height="2" fill="#ddc16a"/><circle cx="9.5" cy="3" r="2.3" fill="#f0b429"/></svg>
<div class="t" style="left:1260.70px;top:75.00px;font-size:9.4px;line-height:9.4px;color:#3b82f6;">Licença</div>
<svg class="b" style="left:1311.50px;top:73.80px;" width="12" height="12" viewBox="0 0 12 12"><g fill="#5b6068"><circle cx="6" cy="6" r="4.2"/><g stroke="#5b6068" stroke-width="1.6"><path d="M6 .5v11M.5 6h11M2.1 2.1l7.8 7.8M9.9 2.1l-7.8 7.8"/></g></g><circle cx="6" cy="6" r="2.4" fill="#d8dade"/><circle cx="6" cy="6" r="1.2" fill="#5b6068"/></svg>
<div class="t" style="left:1325.50px;top:75.00px;font-size:9.55px;line-height:9.55px;color:#3b82f6;">Configurações</div>
<div class="b" style="left:1400.30px;top:69.40px;width:20.30px;height:20.40px;background:#f7f8fa;border:1px solid #e3e6ea;border-radius:4px;box-sizing:border-box;"></div>
<svg class="b" style="left:1406.50px;top:75.00px;" width="9" height="9" viewBox="0 0 9 9"><path d="M1.8 7.2L7.2 1.8M3.2 1.8h4v4" stroke="#4b5563" stroke-width="1.3" fill="none" stroke-linecap="round" stroke-linejoin="round"/></svg>
<svg class="b" style="left:889.30px;top:104.30px;" width="9.9" height="10.842857142857143" viewBox="0 0 21 23"><rect x="0" y="2" width="21" height="21" rx="1.8" fill="#b8873c"/><rect x="1.7" y="3.8" width="17.6" height="17.6" fill="#efefef"/><rect x="3.2" y="6.5" width="14.6" height="12" fill="#dadada"/><rect x="4" y="3" width="13" height="2.2" fill="#a9aeb5"/><path d="M8 3.4L10.5 .3 13 3.4z" fill="#b9c6d3"/></svg>
<div class="t" style="left:902.30px;top:106.00px;font-size:9.1px;line-height:9.1px;color:#9ca3af;">Kanban</div>
<svg class="b" style="left:961.80px;top:103.80px;" width="11" height="11" viewBox="0 0 12 12"><rect x="0.6" y="0.3" width="10.8" height="11.4" fill="#e3e9f2"/><rect x="1.3" y="4.8" width="2.6" height="6.6" fill="#22b14c"/><rect x="4.7" y="6.5" width="2.6" height="4.9" fill="#d11d1d"/><rect x="8.1" y="2.2" width="2.6" height="9.2" fill="#1f5ed6"/></svg>
<div class="t" style="left:975.30px;top:106.00px;font-size:9.3px;line-height:9.3px;color:#4b5563;">Relatórios</div>
<div class="b" style="left:950.70px;top:119.00px;width:77.20px;height:2.00px;background:#8b95a5;"></div>
<div class="b" style="left:1434.00px;top:123.50px;width:11.00px;height:689.50px;background:#fafafa;border-left:1px solid #ececec;box-sizing:border-box;"></div>
<div class="b" style="left:1436.80px;top:126.00px;width:6.20px;height:354.00px;background:#c2c2c2;border-radius:3px;"></div>
<svg class="b" style="left:496.50px;top:165.50px;" width="22.5" height="22.5" viewBox="0 0 12 12"><rect x="0.6" y="0.3" width="10.8" height="11.4" fill="#e3e9f2"/><rect x="1.3" y="4.8" width="2.6" height="6.6" fill="#22b14c"/><rect x="4.7" y="6.5" width="2.6" height="4.9" fill="#d11d1d"/><rect x="8.1" y="2.2" width="2.6" height="9.2" fill="#1f5ed6"/></svg>
<div class="t" style="left:525.50px;top:167.00px;font-size:23px;line-height:23px;color:#1f2937;font-weight:700;">Relatórios</div>
<div class="t" style="left:496.00px;top:205.00px;font-size:12.1px;line-height:12.1px;color:#6b7280;">Análises e relatórios do Kanban Chatwoot</div>
<div class="b" style="left:496.00px;top:244.00px;width:903.00px;height:53.20px;background:#fff;border-radius:7px;box-shadow:0 1px 2px rgba(0,0,0,0.06);"></div>
<div class="t" style="left:508.20px;top:266.00px;font-size:11px;line-height:11px;color:#374151;">Período:</div>
<div class="b" style="left:558.20px;top:257.40px;width:113.10px;height:27.00px;background:#fff;border:1px solid #d1d5db;border-radius:5px;box-sizing:border-box;"></div>
<div class="t" style="left:574.50px;top:266.00px;font-size:10.6px;line-height:10.6px;color:#111827;">Todos</div>
<svg class="b" style="left:660.50px;top:268.00px;" width="8" height="6" viewBox="0 0 8 6"><path d="M1 1.3l3 3 3-3" stroke="#1f2937" stroke-width="1.4" fill="none" stroke-linecap="round" stroke-linejoin="round"/></svg>
<div class="b" style="left:1282.40px;top:255.90px;width:104.60px;height:29.20px;background:#3b82f6;border-radius:5px;"></div>
<svg class="b" style="left:1294.50px;top:263.50px;" width="14" height="14" viewBox="0 0 14 14"><defs><linearGradient id="tg" x1="0" y1="0" x2="0" y2="1"><stop offset="0" stop-color="#62b6f2"/><stop offset="1" stop-color="#1d68b8"/></linearGradient></defs><circle cx="6.7" cy="2.9" r="2.4" fill="#ee3b2f"/><rect x="0.2" y="5.6" width="13" height="4" fill="url(#tg)"/><path d="M.2 5.6h1.6l-1 3.3H.2zM13.2 5.6h-1.6l1 3.3h.6z" fill="#0f3f78"/><path d="M.2 8.6H3.6c.6 0 1 .3 1.3.8.4.8 1 1.3 1.8 1.3s1.4-.5 1.8-1.3c.3-.5.7-.8 1.3-.8H13.2v5.2H.2z" fill="#faf7ea"/></svg>
<div class="t" style="left:1310.70px;top:267.00px;font-size:10.55px;line-height:10.55px;color:#ffffff;">Exportar CSV</div>
<div class="b" style="left:496.00px;top:321.40px;width:216.50px;height:80.80px;background:#fff;border-radius:7px;box-shadow:0 1px 2px rgba(0,0,0,0.06);"></div>
<svg class="b" style="left:513.00px;top:348.00px;" width="26" height="26" viewBox="0 0 26 26"><defs><radialGradient id="bg1" cx="50%" cy="45%" r="55%"><stop offset="0.6" stop-color="#ffffff"/><stop offset="1" stop-color="#bdbdbd"/></radialGradient></defs><path d="M6 16.5L3.8 24.9 11.5 20z" fill="#a9a9a9"/><ellipse cx="13.2" cy="11.35" rx="11.7" ry="9.95" fill="url(#bg1)"/><rect x="8.2" y="11" width="1.9" height="1.9" fill="#2a2a2a"/><rect x="12.3" y="11" width="1.9" height="1.9" fill="#2a2a2a"/><rect x="16.5" y="11" width="1.9" height="1.9" fill="#2a2a2a"/></svg>
<div class="t" style="left:550.40px;top:343.00px;font-size:19.6px;line-height:19.6px;color:#111827;font-weight:700;transform:scaleX(1.2);transform-origin:left;">825</div>
<div class="t" style="left:550.20px;top:371.00px;font-size:10.8px;line-height:10.8px;color:#6b7280;">Total de Conversas</div>
<div class="b" style="left:724.90px;top:321.40px;width:216.50px;height:80.80px;background:#fff;border-radius:7px;box-shadow:0 1px 2px rgba(0,0,0,0.06);"></div>
<svg class="b" style="left:743.90px;top:351.60px;" width="22" height="22" viewBox="0 0 22 22"><defs><linearGradient id="mbg" x1="0" y1="0" x2="0" y2="1"><stop offset="0" stop-color="#5bc0ee"/><stop offset="1" stop-color="#2a86c8"/></linearGradient></defs><rect x="9.3" y="16" width="4" height="5.5" fill="#b88d45"/><path d="M5 1.8h12.5a4.3 4.3 0 0 1 4.3 4.3V16.3H5z" fill="url(#mbg)"/><path d="M0 16.3V6a4.4 4.4 0 0 1 8.8 0v10.3z" fill="#1e1e1e"/><path d="M1.7 16.3V6.6a2.7 2.7 0 0 1 5.4 0v9.7z" fill="#cfcfcf"/><path d="M10.8 0h6.2v3.3h-3.6v10.4h-2.6z" fill="#ea1f1f"/></svg>
<div class="t" style="left:779.30px;top:343.00px;font-size:19.6px;line-height:19.6px;color:#111827;font-weight:700;transform:scaleX(1.2);transform-origin:left;">2</div>
<div class="t" style="left:779.10px;top:371.00px;font-size:10.8px;line-height:10.8px;color:#6b7280;">Não Lidas</div>
<div class="b" style="left:953.50px;top:321.40px;width:216.50px;height:80.80px;background:#fff;border-radius:7px;box-shadow:0 1px 2px rgba(0,0,0,0.06);"></div>
<svg class="b" style="left:972.00px;top:353.80px;" width="24" height="20" viewBox="0 0 24 20"><defs><linearGradient id="pg" x1="0" y1="0" x2="0" y2="1"><stop offset="0" stop-color="#82a9cc"/><stop offset="1" stop-color="#4a7298"/></linearGradient></defs><ellipse cx="6" cy="6.2" rx="4.9" ry="6.2" fill="url(#pg)"/><ellipse cx="17.2" cy="6.2" rx="4.9" ry="6.2" fill="url(#pg)"/><path d="M0 14.8c0-1.2 1.6-1.8 3.6-2.4h4.8l3.2 1.2 3.2-1.2h4.8c2 .6 3.6 1.2 3.6 2.4v4.2H0z" fill="#4d769b"/></svg>
<div class="t" style="left:1007.90px;top:343.00px;font-size:19.6px;line-height:19.6px;color:#111827;font-weight:700;transform:scaleX(1.2);transform-origin:left;">3</div>
<div class="t" style="left:1007.70px;top:371.00px;font-size:10.8px;line-height:10.8px;color:#6b7280;">Agentes Ativos</div>
<div class="b" style="left:1182.50px;top:321.40px;width:216.50px;height:80.80px;background:#fff;border-radius:7px;box-shadow:0 1px 2px rgba(0,0,0,0.06);"></div>
<svg class="b" style="left:1202.10px;top:349.00px;" width="20.7" height="22.67142857142857" viewBox="0 0 21 23"><rect x="0" y="2" width="21" height="21" rx="1.8" fill="#b8873c"/><rect x="1.7" y="3.8" width="17.6" height="17.6" fill="#efefef"/><rect x="3.2" y="6.5" width="14.6" height="12" fill="#dadada"/><rect x="4" y="3" width="13" height="2.2" fill="#a9aeb5"/><path d="M8 3.4L10.5 .3 13 3.4z" fill="#b9c6d3"/></svg>
<div class="t" style="left:1236.90px;top:343.00px;font-size:19.6px;line-height:19.6px;color:#111827;font-weight:700;transform:scaleX(1.2);transform-origin:left;">3</div>
<div class="t" style="left:1236.70px;top:371.00px;font-size:10.8px;line-height:10.8px;color:#6b7280;">Status Diferentes</div>
<div class="b" style="left:496.00px;top:426.10px;width:903.00px;height:302.20px;background:#fff;border-radius:7px;box-shadow:0 1px 2px rgba(0,0,0,0.06);"></div>
<svg class="b" style="left:513.90px;top:446.10px;" width="16.5" height="16.5" viewBox="0 0 17 17"><rect x="0" y="0" width="17" height="17" fill="#dedede"/><rect x="0" y="0" width="17" height="7" fill="#b04a4a"/><rect x="3.4" y="0" width="1" height="1.8" fill="#f2dede"/><rect x="12.6" y="0" width="1" height="1.8" fill="#f2dede"/><path d="M4.5 9.6l1.7-1.1h.6v6.8" stroke="#3a3a3a" stroke-width="1.2" fill="none"/><path d="M8.6 8.5h4.2l-2.6 6.8" stroke="#3a3a3a" stroke-width="1.2" fill="none"/></svg>
<div class="t" style="left:534.50px;top:447.00px;font-size:15px;line-height:15px;color:#1f2937;-webkit-text-stroke:0.45px #1f2937;">Conversas por Data</div>
<div class="b" style="left:619.50px;top:627.79px;width:60.00px;height:19.41px;background:linear-gradient(180deg,#8b5cf6,#7c3aed);border-radius:4px 4px 0 0;"></div>
<div class="t" style="left:549.50px;width:200px;text-align:center;top:655.00px;font-size:10.4px;line-height:10.4px;color:#6b7280;transform:scaleX(0.93);transform-origin:center;">30/11/2025</div>
<div class="t" style="left:549.50px;width:200px;text-align:center;top:675.00px;font-size:9.6px;line-height:9.6px;color:#3b4452;font-weight:700;transform:scaleX(0.95);transform-origin:center;">4</div>
<div class="b" style="left:685.70px;top:530.75px;width:60.00px;height:116.45px;background:linear-gradient(180deg,#8b5cf6,#7c3aed);border-radius:4px 4px 0 0;"></div>
<div class="t" style="left:615.70px;width:200px;text-align:center;top:655.00px;font-size:10.4px;line-height:10.4px;color:#6b7280;transform:scaleX(0.93);transform-origin:center;">29/11/2025</div>
<div class="t" style="left:615.70px;width:200px;text-align:center;top:675.00px;font-size:9.6px;line-height:9.6px;color:#3b4452;font-weight:700;transform:scaleX(0.95);transform-origin:center;">24</div>
<div class="b" style="left:751.90px;top:550.16px;width:60.00px;height:97.04px;background:linear-gradient(180deg,#8b5cf6,#7c3aed);border-radius:4px 4px 0 0;"></div>
<div class="t" style="left:681.90px;width:200px;text-align:center;top:655.00px;font-size:10.4px;line-height:10.4px;color:#6b7280;transform:scaleX(0.93);transform-origin:center;">28/11/2025</div>
<div class="t" style="left:681.90px;width:200px;text-align:center;top:675.00px;font-size:9.6px;line-height:9.6px;color:#3b4452;font-weight:700;transform:scaleX(0.95);transform-origin:center;">20</div>
<div class="b" style="left:818.10px;top:496.79px;width:60.00px;height:150.41px;background:linear-gradient(180deg,#8b5cf6,#7c3aed);border-radius:4px 4px 0 0;"></div>
<div class="t" style="left:748.10px;width:200px;text-align:center;top:655.00px;font-size:10.4px;line-height:10.4px;color:#6b7280;transform:scaleX(0.93);transform-origin:center;">27/11/2025</div>
<div class="t" style="left:748.10px;width:200px;text-align:center;top:675.00px;font-size:9.6px;line-height:9.6px;color:#3b4452;font-weight:700;transform:scaleX(0.95);transform-origin:center;">31</div>
<div class="b" style="left:884.30px;top:564.72px;width:60.00px;height:82.48px;background:linear-gradient(180deg,#8b5cf6,#7c3aed);border-radius:4px 4px 0 0;"></div>
<div class="t" style="left:814.30px;width:200px;text-align:center;top:655.00px;font-size:10.4px;line-height:10.4px;color:#6b7280;transform:scaleX(0.93);transform-origin:center;">26/11/2025</div>
<div class="t" style="left:814.30px;width:200px;text-align:center;top:675.00px;font-size:9.6px;line-height:9.6px;color:#3b4452;font-weight:700;transform:scaleX(0.95);transform-origin:center;">17</div>
<div class="b" style="left:950.50px;top:642.35px;width:60.00px;height:4.85px;background:linear-gradient(180deg,#8b5cf6,#7c3aed);border-radius:4px 4px 0 0;"></div>
<div class="t" style="left:880.50px;width:200px;text-align:center;top:655.00px;font-size:10.4px;line-height:10.4px;color:#6b7280;transform:scaleX(0.93);transform-origin:center;">19/11/2025</div>
<div class="t" style="left:880.50px;width:200px;text-align:center;top:675.00px;font-size:9.6px;line-height:9.6px;color:#3b4452;font-weight:700;transform:scaleX(0.95);transform-origin:center;">1</div>
<div class="b" style="left:1016.70px;top:632.64px;width:60.00px;height:14.56px;background:linear-gradient(180deg,#8b5cf6,#7c3aed);border-radius:4px 4px 0 0;"></div>
<div class="t" style="left:946.70px;width:200px;text-align:center;top:655.00px;font-size:10.4px;line-height:10.4px;color:#6b7280;transform:scaleX(0.93);transform-origin:center;">18/11/2025</div>
<div class="t" style="left:946.70px;width:200px;text-align:center;top:675.00px;font-size:9.6px;line-height:9.6px;color:#3b4452;font-weight:700;transform:scaleX(0.95);transform-origin:center;">3</div>
<div class="b" style="left:1082.90px;top:637.50px;width:60.00px;height:9.70px;background:linear-gradient(180deg,#8b5cf6,#7c3aed);border-radius:4px 4px 0 0;"></div>
<div class="t" style="left:1012.90px;width:200px;text-align:center;top:655.00px;font-size:10.4px;line-height:10.4px;color:#6b7280;transform:scaleX(0.93);transform-origin:center;">17/11/2025</div>
<div class="t" style="left:1012.90px;width:200px;text-align:center;top:675.00px;font-size:9.6px;line-height:9.6px;color:#3b4452;font-weight:700;transform:scaleX(0.95);transform-origin:center;">2</div>
<div class="b" style="left:1149.10px;top:642.35px;width:60.00px;height:4.85px;background:linear-gradient(180deg,#8b5cf6,#7c3aed);border-radius:4px 4px 0 0;"></div>
<div class="t" style="left:1079.10px;width:200px;text-align:center;top:655.00px;font-size:10.4px;line-height:10.4px;color:#6b7280;transform:scaleX(0.93);transform-origin:center;">16/11/2025</div>
<div class="t" style="left:1079.10px;width:200px;text-align:center;top:675.00px;font-size:9.6px;line-height:9.6px;color:#3b4452;font-weight:700;transform:scaleX(0.95);transform-origin:center;">1</div>
<div class="b" style="left:1215.30px;top:642.35px;width:60.00px;height:4.85px;background:linear-gradient(180deg,#8b5cf6,#7c3aed);border-radius:4px 4px 0 0;"></div>
<div class="t" style="left:1145.30px;width:200px;text-align:center;top:655.00px;font-size:10.4px;line-height:10.4px;color:#6b7280;transform:scaleX(0.93);transform-origin:center;">14/11/2025</div>
<div class="t" style="left:1145.30px;width:200px;text-align:center;top:675.00px;font-size:9.6px;line-height:9.6px;color:#3b4452;font-weight:700;transform:scaleX(0.95);transform-origin:center;">1</div>
<div class="b" style="left:496.00px;top:746.80px;width:903.00px;height:153.20px;background:#fff;border-radius:7px;box-shadow:0 1px 2px rgba(0,0,0,0.06);"></div>
<svg class="b" style="left:515.30px;top:767.80px;" width="14.4" height="15.77142857142857" viewBox="0 0 21 23"><rect x="0" y="2" width="21" height="21" rx="1.8" fill="#b8873c"/><rect x="1.7" y="3.8" width="17.6" height="17.6" fill="#efefef"/><rect x="3.2" y="6.5" width="14.6" height="12" fill="#dadada"/><rect x="4" y="3" width="13" height="2.2" fill="#a9aeb5"/><path d="M8 3.4L10.5 .3 13 3.4z" fill="#b9c6d3"/></svg>
<div class="t" style="left:534.30px;top:769.00px;font-size:15.45px;line-height:15.45px;color:#1f2937;-webkit-text-stroke:0.45px #1f2937;">Distribuição por Status do Kanban</div>
<div class="b" style="left:520.80px;top:805.00px;width:174.00px;height:174.00px;border-radius:50%;background:conic-gradient(#3b82f6 0deg 200deg,#10b981 200deg 346deg,#f59e0b 346deg 360deg);"></div>

</body></html>
